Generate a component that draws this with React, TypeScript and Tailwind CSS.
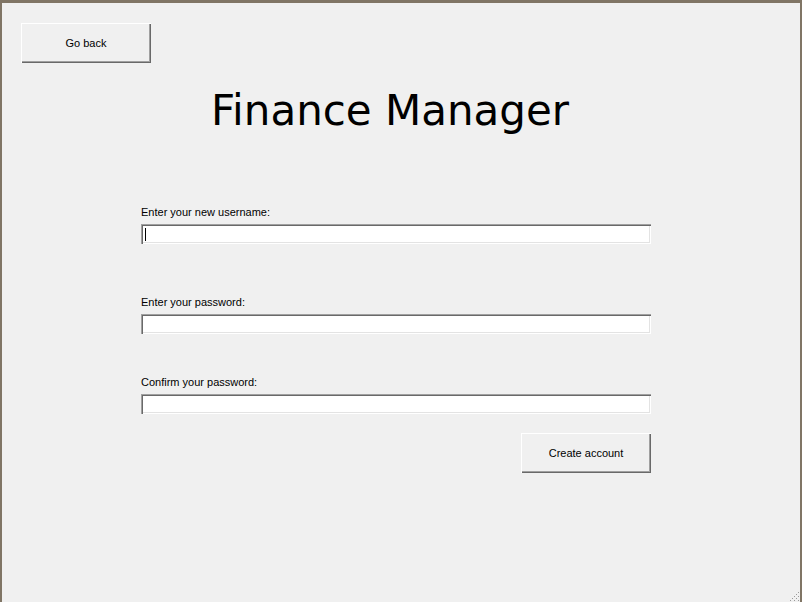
import * as React from "react";

const raised =
  "shadow-[inset_1px_1px_0_#ffffff,inset_-1px_-1px_0_#696969,inset_-2px_-2px_0_#a0a0a0]";
const sunken =
  "shadow-[inset_1px_1px_0_#a0a0a0,inset_2px_2px_0_#696969,inset_-1px_-1px_0_#ffffff,inset_-2px_-2px_0_#e3e3e3]";

function WinButton({ children, className }: { children: React.ReactNode; className?: string }) {
  return (
    <button
      className={`flex h-[40px] w-[130px] items-center justify-center bg-[#f0f0f0] text-[11px] leading-[13px] text-black ${raised} ${className ?? ""}`}
      type="button"
    >
      {children}
    </button>
  );
}

function Field({ label, caret, className }: { label: string; caret?: boolean; className?: string }) {
  return (
    <div className={`flex flex-col ${className ?? ""}`}>
      <label className="h-[13px] text-[11px] leading-[13px] text-black">{label}</label>
      <div className={`mt-[5px] flex h-[20px] w-[510px] items-center bg-white pl-[4px] ${sunken}`}>
        {caret && <span className="h-[13px] w-px bg-black" />}
      </div>
    </div>
  );
}

export default function App() {
  return (
    <div className="relative h-[602px] w-[802px] overflow-hidden border-t-[3px] border-r-2 border-l-2 border-[#807565] bg-[#f0f0f0] font-['Liberation_Sans',Arial,sans-serif]">
      <WinButton className="mt-[20px] ml-[19px]">Go back</WinButton>

      <h1 className="mt-[24px] ml-[209px] h-[48px] font-['DejaVu_Sans',Tahoma,sans-serif] text-[42px] leading-[48px] font-normal text-black">
        Finance Manager
      </h1>

      <div className="ml-[139px] flex w-[510px] flex-col">
        <Field className="mt-[71px]" label="Enter your new username:" caret />
        <Field className="mt-[52px]" label="Enter your password:" />
        <Field className="mt-[42px]" label="Confirm your password:" />
        <div className="mt-[19px] flex justify-end">
          <WinButton>Create account</WinButton>
        </div>
      </div>

      <svg
        aria-hidden="true"
        className="absolute right-0 bottom-0"
        height="12"
        viewBox="0 0 12 12"
        width="12"
      >
        {[
          [10, 2], [10, 6], [10, 10], [6, 6], [6, 10], [2, 10],
          [8, 4], [8, 8], [4, 8],
        ].map(([x, y]) => (
          <rect fill="#9a9a9a" height="1" key={`${x}-${y}`} width="1" x={x} y={y} />
        ))}
      </svg>
    </div>
  );
}
